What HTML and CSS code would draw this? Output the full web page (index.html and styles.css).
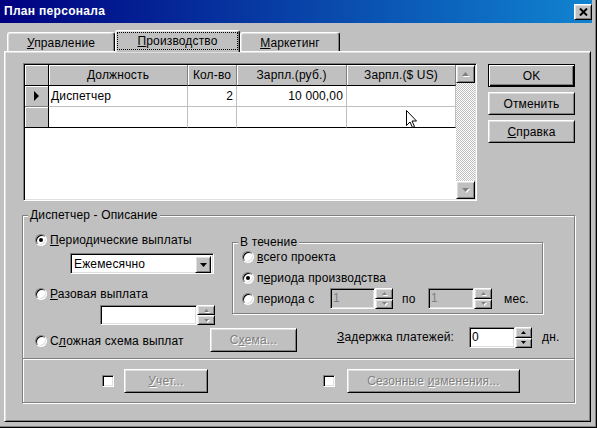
FILE: index.html
```html
<!DOCTYPE html>
<html lang="ru">
<head>
<meta charset="utf-8">
<title>План персонала</title>
<link rel="stylesheet" href="styles.css">
</head>
<body>
<div class="window">
  <div class="titlebar">
    <span class="title">План персонала</span>
    <span class="close-btn raised"><svg width="9" height="8" viewBox="0 0 9 8"><path d="M1 0.5 L8 7.5 M8 0.5 L1 7.5" stroke="#000" stroke-width="2"/></svg></span>
  </div>
  <div class="tabs">
    <div class="tab tab-1"><span><u>У</u>правление</span></div>
    <div class="tab tab-2"><span class="focus"><u>П</u>роизводство</span></div>
    <div class="tab tab-3"><span><u>М</u>аркетинг</span></div>
  </div>
  <div class="panel">
    <div class="top-row">
      <div class="gridbox">
        <div class="table-area">
          <div class="table">
            <div class="hc ind"></div>
            <div class="hc">Должность</div>
            <div class="hc">Кол-во</div>
            <div class="hc">Зарпл.(руб.)</div>
            <div class="hc">Зарпл.($ US)</div>
            <div class="ic"><span class="row-arrow"></span></div>
            <div class="dc">Диспетчер</div>
            <div class="dc num">2</div>
            <div class="dc num">10 000,00</div>
            <div class="dc"></div>
            <div class="ic last"></div>
            <div class="dc last"></div>
            <div class="dc last"></div>
            <div class="dc last"></div>
            <div class="dc last"></div>
          </div>
        </div>
        <div class="vscroll">
          <div class="sbtn raised"><svg class="arr-dis" width="7" height="4" viewBox="0 0 7 4"><path d="M3.5 0 L7 4 L0 4Z"/></svg></div>
          <div class="track"></div>
          <div class="sbtn raised"><svg class="arr-dis" width="7" height="4" viewBox="0 0 7 4"><path d="M0 0 L7 0 L3.5 4Z"/></svg></div>
        </div>
        <svg class="cursor" width="12" height="19" viewBox="0 0 12 19"><path d="M0.5 0.5 V15.5 L4 12 L6.5 17.5 L8.5 16.5 L6 11 H10.5 Z" fill="#fff" stroke="#000" stroke-width="1"/></svg>
      </div>
      <div class="btn-col">
        <div class="btn default">OK</div>
        <div class="btn raised">Отменить</div>
        <div class="btn raised"><span><u>С</u>правка</span></div>
      </div>
    </div>

    <div class="group main-group">
      <div class="legend">Диспетчер - Описание</div>
      <div class="row-a">
        <div class="left-col">
          <div class="radio-row r1"><span class="radio checked"></span><span><u>П</u>ериодические выплаты</span></div>
          <div class="combo sunken">
            <span class="combo-text">Ежемесячно</span>
            <span class="combo-btn raised"><svg width="7" height="4" viewBox="0 0 7 4"><path d="M0 0 L7 0 L3.5 4Z" fill="#000"/></svg></span>
          </div>
          <div class="radio-row r2"><span class="radio"></span><span><u>Р</u>азовая выплата</span></div>
          <div class="edit-row">
            <span class="edit sunken once"></span>
            <span class="spin">
              <span class="spin-btn raised"><svg class="arr-dis" width="5" height="3" viewBox="0 0 5 3"><path d="M2.5 0 L5 3 L0 3Z"/></svg></span>
              <span class="spin-btn raised"><svg class="arr-dis" width="5" height="3" viewBox="0 0 5 3"><path d="M0 0 L5 0 L2.5 3Z"/></svg></span>
            </span>
          </div>
        </div>
        <div class="group during">
          <div class="legend legend-during">В течение</div>
          <div class="radio-row d1"><span class="radio"></span><span><u>в</u>сего проекта</span></div>
          <div class="radio-row d2"><span class="radio checked"></span><span>п<u>е</u>риода производства</span></div>
          <div class="d3">
            <div class="radio-row d3-radio"><span class="radio"></span><span>перио<u>д</u>а с</span></div>
            <span class="edit sunken disabled-edit e-from">1</span>
            <span class="spin s21">
              <span class="spin-btn raised"><svg class="arr-dis" width="5" height="3" viewBox="0 0 5 3"><path d="M2.5 0 L5 3 L0 3Z"/></svg></span>
              <span class="spin-btn raised"><svg class="arr-dis" width="5" height="3" viewBox="0 0 5 3"><path d="M0 0 L5 0 L2.5 3Z"/></svg></span>
            </span>
            <span class="po">по</span>
            <span class="edit sunken disabled-edit e-to">1</span>
            <span class="spin s21">
              <span class="spin-btn raised"><svg class="arr-dis" width="5" height="3" viewBox="0 0 5 3"><path d="M2.5 0 L5 3 L0 3Z"/></svg></span>
              <span class="spin-btn raised"><svg class="arr-dis" width="5" height="3" viewBox="0 0 5 3"><path d="M0 0 L5 0 L2.5 3Z"/></svg></span>
            </span>
            <span class="mes">мес.</span>
          </div>
        </div>
      </div>

      <div class="row-b">
        <div class="radio-row rb-radio"><span class="radio"></span><span>С<u>л</u>ожная схема выплат</span></div>
        <div class="btn raised scheme disabled"><span>С<u>х</u>ема...</span></div>
        <span class="delay-label"><u>З</u>адержка платежей:</span>
        <span class="edit sunken delay">0</span>
        <span class="spin s21 spin-delay">
          <span class="spin-btn raised"><svg width="5" height="3" viewBox="0 0 5 3"><path d="M2.5 0 L5 3 L0 3Z" fill="#000"/></svg></span>
          <span class="spin-btn raised"><svg width="5" height="3" viewBox="0 0 5 3"><path d="M0 0 L5 0 L2.5 3Z" fill="#000"/></svg></span>
        </span>
        <span class="unit">дн.</span>
      </div>

      <div class="divider"></div>

      <div class="row-c">
        <span class="check sunken"></span>
        <div class="btn raised ucet disabled"><span><u>У</u>чет...</span></div>
        <span class="check sunken check-2"></span>
        <div class="btn raised season disabled"><span>Сезонные <u>и</u>зменения...</span></div>
      </div>
    </div>
  </div>
</div>
</body>
</html>
```

FILE: styles.css
```css
* { box-sizing: border-box; }
html, body { margin: 0; padding: 0; }
body {
  width: 597px;
  height: 428px;
  overflow: hidden;
  background: #c0c0c0;
  font-family: "Liberation Sans", Arial, sans-serif;
  font-size: 12px;
  letter-spacing: 0.15px;
  color: #000;
}
u { text-decoration: underline; text-underline-offset: 1px; }

.raised {
  background: #c0c0c0;
  border: 1px solid;
  border-color: #fff #000 #000 #fff;
  box-shadow: inset 1px 1px 0 #dfdfdf, inset -1px -1px 0 #808080;
}
.sunken {
  background: #fff;
  border: 1px solid;
  border-color: #808080 #fff #fff #808080;
  box-shadow: inset 1px 1px 0 #000, inset -1px -1px 0 #dfdfdf;
}

.window {
  width: 597px;
  height: 428px;
  padding-right: 5px;
  background: #c0c0c0;
  box-shadow: inset -1px -1px 0 #000, inset -2px -2px 0 #808080;
}

/* Title bar */
.titlebar {
  height: 23px;
  display: flex;
  align-items: flex-start;
  justify-content: space-between;
  padding-left: 4px;
  background: linear-gradient(to right, #000080 0%, #1084d0 100%);
  color: #fff;
  font-weight: bold;
  letter-spacing: 0.3px;
}
.title { line-height: 22px; }
.close-btn {
  margin-top: 4px;
  width: 18px;
  height: 16px;
  display: flex;
  align-items: center;
  justify-content: center;
}

/* Tabs */
.tabs {
  display: flex;
  align-items: flex-end;
  height: 21px;
  margin-top: 7px;
  padding-left: 7px;
  position: relative;
  z-index: 1;
}
.tab {
  height: 19px;
  background: #c0c0c0;
  border: 1px solid;
  border-bottom: 0;
  border-color: #fff #000 #000 #fff;
  border-radius: 3px 3px 0 0;
  box-shadow: inset -1px 0 0 #808080, inset 1px 1px 0 #dfdfdf;
  display: flex;
  align-items: center;
  justify-content: center;
  padding-top: 1px;
}
.tab-1 { width: 108px; }
.tab-2 {
  width: 125px;
  height: 22px;
  margin-bottom: -1px;
  padding: 1px 1px 2px 1px;
  align-items: stretch;
}
.tab-3 { width: 100px; }
.focus {
  flex: 1;
  border: 1px dotted #000;
  display: flex;
  align-items: center;
  justify-content: center;
}

/* Panel */
.panel {
  margin-left: 4px;
  width: 587px;
  height: 371px;
  border: 1px solid;
  border-color: #fff #000 #000 #fff;
  box-shadow: inset 1px 1px 0 #dfdfdf, inset -1px -1px 0 #808080;
  padding: 11px 0 0 17px;
}
.top-row {
  display: flex;
  align-items: flex-start;
}

/* Data grid */
.gridbox {
  position: relative;
  margin-left: 1px;
  width: 454px;
  height: 138px;
  display: flex;
  padding: 1px;
  border: 1px solid;
  border-color: #808080 #fff #fff #808080;
  box-shadow: inset 1px 1px 0 #000, inset -1px -1px 0 #dfdfdf;
}
.table-area {
  flex: 1;
  background: #fff;
}
.table {
  display: grid;
  grid-template-columns: 24px 139px 49px 110px 109px;
  grid-auto-rows: 21px;
}
.hc {
  background: #c0c0c0;
  border-right: 1px solid #808080;
  border-bottom: 1px solid #000;
  box-shadow: inset 1px 1px 0 #fff;
  text-align: center;
  line-height: 20px;
  white-space: nowrap;
}
.hc.ind { border-right-color: #000; }
.ic {
  background: #c0c0c0;
  border-right: 1px solid #000;
  border-bottom: 1px solid #808080;
  box-shadow: inset 1px 1px 0 #fff;
  display: flex;
  align-items: center;
  justify-content: center;
}
.row-arrow {
  width: 0;
  height: 0;
  border-left: 5px solid #000;
  border-top: 5px solid transparent;
  border-bottom: 5px solid transparent;
}
.dc {
  border-right: 1px solid #c0c0c0;
  border-bottom: 1px solid #c0c0c0;
  padding: 0 2px;
  line-height: 20px;
  white-space: nowrap;
}
.num { text-align: right; padding-right: 3px; }
.last { border-bottom-color: #000; }

.vscroll {
  width: 19px;
  display: flex;
  flex-direction: column;
}
.sbtn {
  height: 18px;
  display: flex;
  align-items: center;
  justify-content: center;
}
.track {
  flex: 1;
  background: repeating-conic-gradient(#c0c0c0 0 25%, #fff 0 50%) 0 0 / 2px 2px;
}
.arr-dis { fill: #808080; filter: drop-shadow(1px 1px 0 #fff); }
.cursor {
  position: absolute;
  left: 382px;
  top: 46px;
}

/* Buttons */
.btn {
  display: flex;
  align-items: center;
  justify-content: center;
  white-space: nowrap;
}
.btn-col {
  margin-left: 11px;
  margin-top: 1px;
  width: 87px;
  display: flex;
  flex-direction: column;
  gap: 5px;
}
.btn-col .btn { height: 23px; }
.btn.default {
  background: #c0c0c0;
  border: 1px solid #000;
  box-shadow: inset 1px 1px 0 #fff, inset -1px -1px 0 #000, inset -2px -2px 0 #808080;
}
.disabled { color: #808080; text-shadow: 1px 1px 0 #fff; }

/* Group boxes */
.group {
  border: 1px solid #808080;
  box-shadow: inset 1px 1px 0 #fff, 1px 1px 0 #fff;
}
.legend {
  width: max-content;
  height: 15px;
  line-height: 15px;
  margin: -8px 0 0 5px;
  padding: 0 2px;
  background: #c0c0c0;
}
.main-group {
  margin-top: 14px;
  width: 553px;
}
.row-a {
  display: flex;
  align-items: flex-start;
}
.left-col {
  width: 209px;
  padding-left: 12px;
}

/* Radios */
.radio-row {
  display: flex;
  align-items: center;
  gap: 3px;
  height: 15px;
  white-space: nowrap;
}
.radio {
  flex: none;
  position: relative;
  width: 12px;
  height: 12px;
  border-radius: 50%;
  background: #fff;
  border: 1px solid;
  border-color: #808080 #fff #fff #808080;
  box-shadow: inset 1px 1px 0 #000, inset -1px -1px 0 #dfdfdf;
}
.radio.checked::after {
  content: "";
  position: absolute;
  left: 3px;
  top: 3px;
  width: 4px;
  height: 4px;
  border-radius: 50%;
  background: #000;
}
.r1 { margin-top: 9px; }
.r2 { margin-top: 12px; }

/* Combo */
.combo {
  display: flex;
  width: 144px;
  height: 21px;
  margin: 6px 0 0 35px;
  padding: 2px;
}
.combo-text {
  flex: 1;
  line-height: 17px;
  padding-left: 1px;
}
.combo-btn {
  width: 16px;
  height: 17px;
  display: flex;
  align-items: center;
  justify-content: center;
}

/* Edits and spins */
.edit {
  display: block;
  line-height: 19px;
  padding-left: 2px;
}
.edit-row {
  display: flex;
  margin: 4px 0 0 65px;
}
.edit.once { width: 97px; height: 20px; }
.spin {
  width: 18px;
  height: 20px;
  display: flex;
  flex-direction: column;
}
.spin.s21 { height: 21px; }
.spin-btn {
  flex: 1;
  display: flex;
  align-items: center;
  justify-content: center;
}
.disabled-edit {
  background: #c0c0c0;
  color: #808080;
}

/* "В течение" */
.during {
  margin-top: 19px;
  width: 311px;
  height: 72px;
}
.legend-during { margin-bottom: -7px; }
.d1, .d2 { padding-left: 9px; margin-top: 6px; }
.d3 {
  display: flex;
  align-items: center;
  margin-top: 3px;
  padding-left: 9px;
  height: 21px;
}
.d3-radio { width: 88px; }
.e-from { width: 45px; height: 21px; }
.e-to { width: 46px; height: 21px; }
.po { margin-left: 9px; width: 26px; }
.mes { margin-left: 12px; }

/* Row B */
.row-b {
  display: flex;
  align-items: flex-start;
  margin: 2px 0 6px;
  padding-left: 12px;
  height: 25px;
}
.rb-radio { width: 175px; margin-top: 6px; }
.scheme { width: 87px; height: 24px; margin-top: 1px; }
.delay-label {
  margin-left: 40px;
  width: 132px;
  line-height: 21px;
  white-space: nowrap;
}
.edit.delay { width: 46px; height: 21px; }
.spin-delay { width: 17px; }
.unit { margin-left: 10px; line-height: 21px; }

.divider {
  height: 2px;
  border-top: 1px solid #808080;
  border-bottom: 1px solid #fff;
}

/* Row C */
.row-c {
  display: flex;
  align-items: flex-start;
  height: 42px;
  padding-left: 79px;
}
.check {
  width: 12px;
  height: 12px;
  margin-top: 15px;
}
.ucet { width: 84px; height: 24px; margin: 9px 0 0 10px; }
.check-2 { margin-left: 115px; }
.season { width: 173px; height: 24px; margin: 9px 0 0 12px; }
```
